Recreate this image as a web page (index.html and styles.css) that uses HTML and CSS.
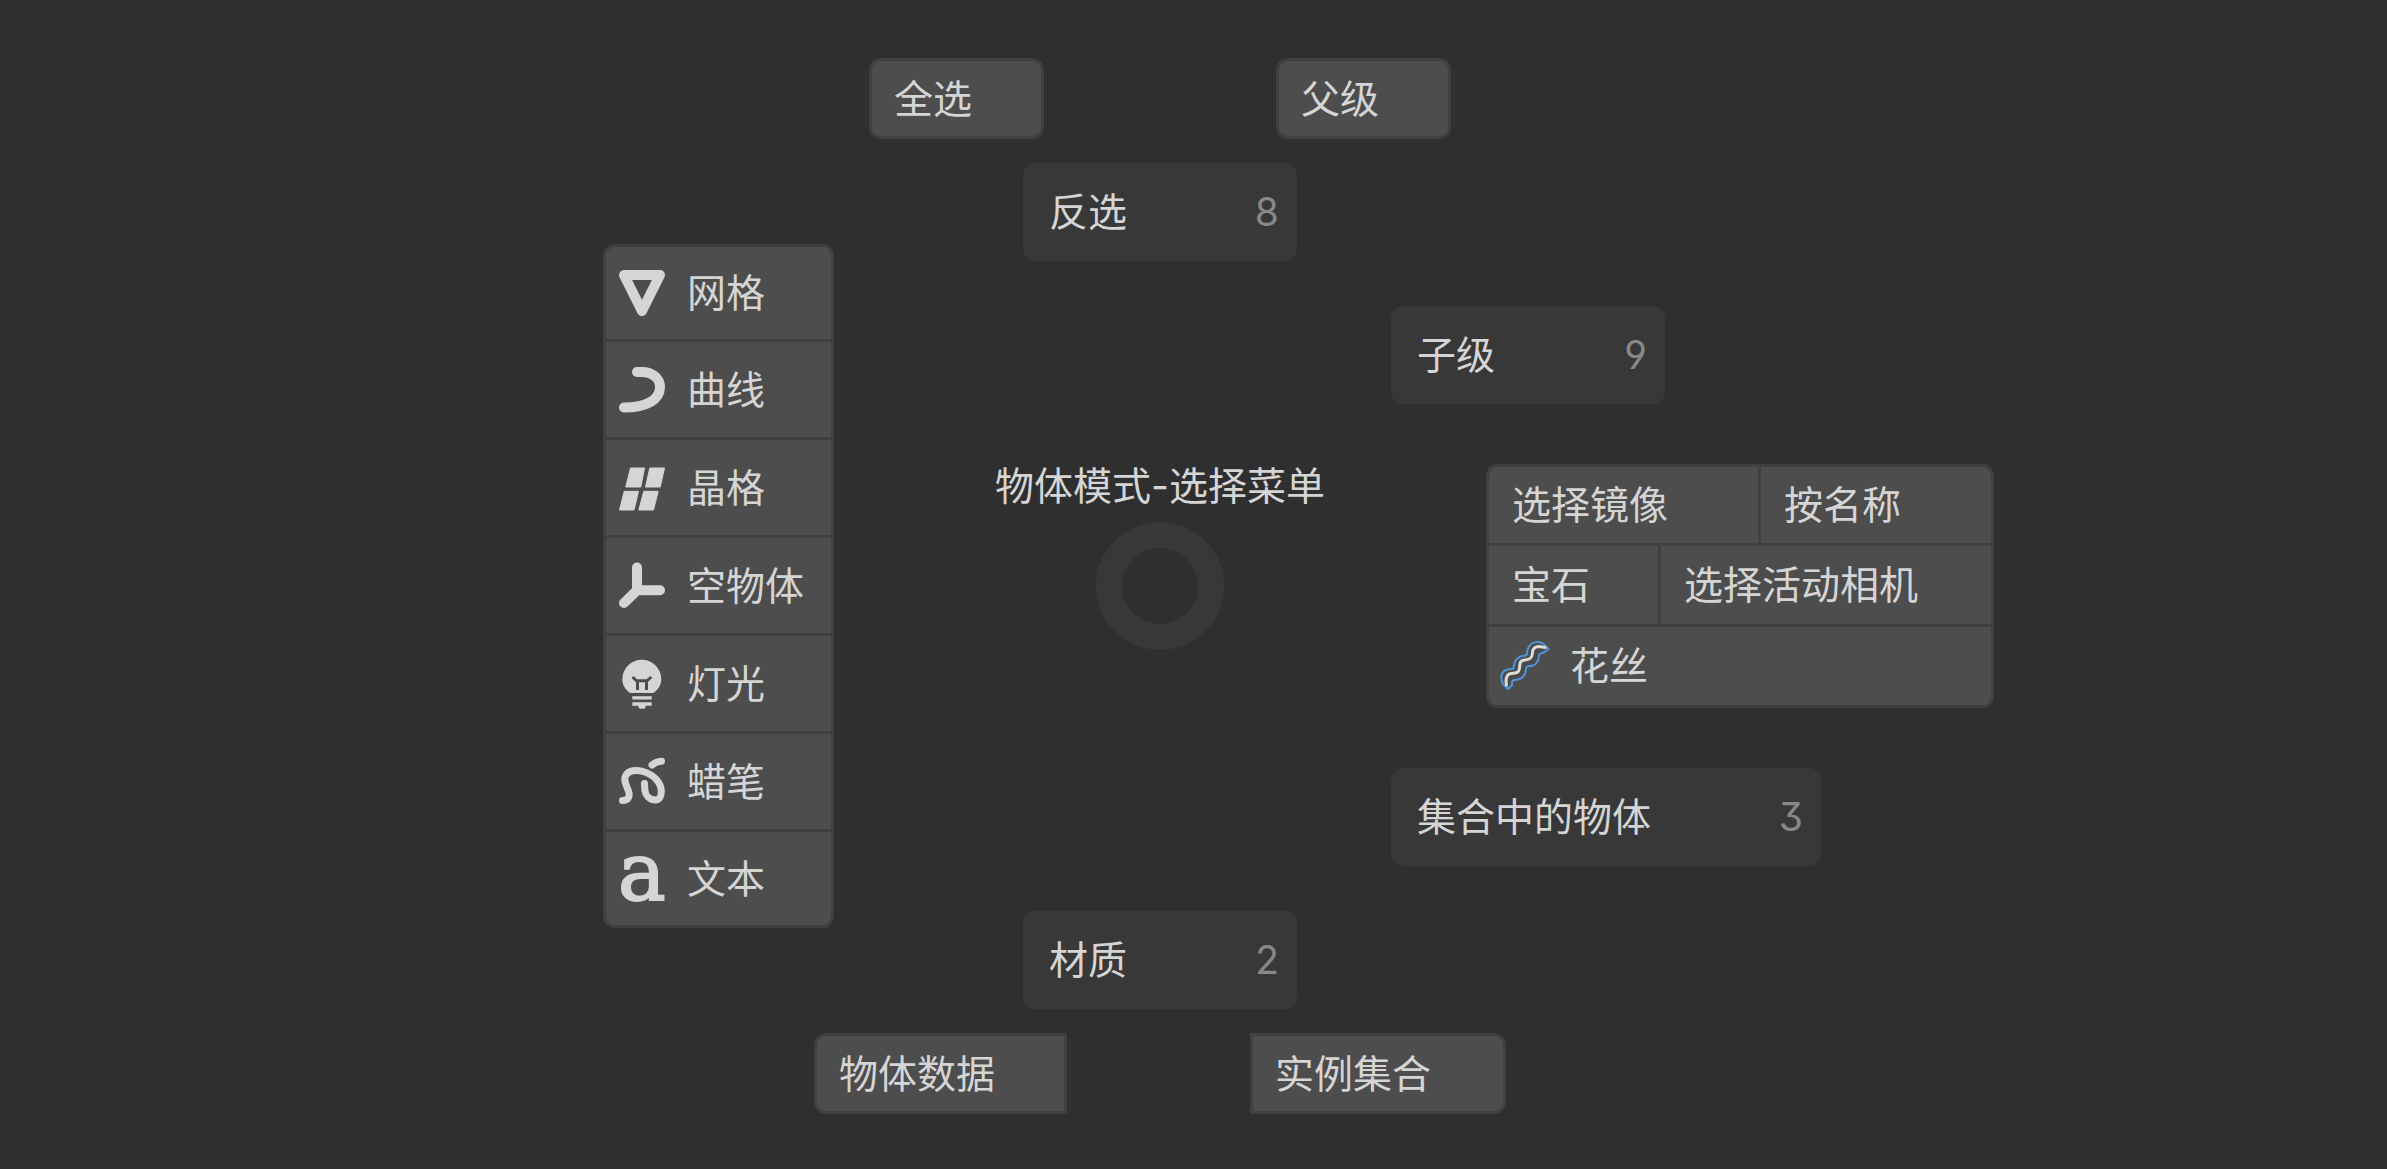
FILE: index.html
```html
<!DOCTYPE html>
<html lang="zh-CN">
<head>
<meta charset="utf-8">
<title>物体模式-选择菜单</title>
<link rel="stylesheet" href="styles.css">
</head>
<body>
<main class="pie">
  <div class="pair pair-top">
    <button class="button" type="button">全选</button>
    <button class="button" type="button">父级</button>
  </div>

  <div class="panel types">
    <button class="cell" type="button">
      <svg class="icon" viewBox="0 0 48 48" aria-hidden="true"><path class="line" d="M6 6H42L24 42Z"/></svg>
      网格
    </button>
    <button class="cell" type="button">
      <svg class="icon" viewBox="0 0 48 48" aria-hidden="true"><path class="line" d="M19 6H24C34 6 42 12 42 21C42 34 28 41.500 6 41.500"/></svg>
      曲线
    </button>
    <button class="cell" type="button">
      <svg class="icon" viewBox="0 0 48 48" aria-hidden="true"><path class="tile" d="M12.500 4H26.500L22.800 23H7.700ZM31.800 4H46.500L42.200 23H27.500ZM6.200 27.300H20.500L16 46H1.500ZM25.800 27.300H40.200L35.500 46H20.800Z"/></svg>
      晶格
    </button>
    <button class="cell" type="button">
      <svg class="icon" viewBox="0 0 48 48" aria-hidden="true"><path class="line" d="M19 5.500V28.300H42M19 28.300L6 41"/></svg>
      空物体
    </button>
    <button class="cell" type="button">
      <svg class="icon" viewBox="0 0 48 48" aria-hidden="true">
        <path class="fill" d="M12 33C7 29.500 4.300 24.500 4.300 19.300A19.500 19.500 0 0 1 43.300 19.300C43.300 24.500 40.500 29.500 35.500 33ZM14.300 36.200H33.700V39.500H14.300ZM14.300 42.200H33.700V45.700H27.500V47.500L26 48.800H22L20.500 47.500V45.700H14.300Z"/>
        <path class="filament" d="M14.500 17L18.500 20.800H29L33.300 17M19.500 20.800V30M28.500 20.800V30"/>
      </svg>
      灯光
    </button>
    <button class="cell" type="button">
      <svg class="icon" viewBox="0 0 48 48" aria-hidden="true"><path class="line thin" d="M4.500 42.500C10 42.500 12.500 39 10.500 33C8 27 5 21 8 17C11 12.500 18 11.500 25 13.500C36 16.500 43.300 25 43.300 33.500C43.300 39 41 42 37.500 42C31 42 27.500 37 26.800 32L26.500 25.500M34 7Q38 3.500 43.500 3.200"/></svg>
      蜡笔
    </button>
    <button class="cell" type="button">
      <svg class="icon" viewBox="0 0 48 48" aria-hidden="true"><text class="letter" x="0" y="45">a</text></svg>
      文本
    </button>
  </div>

  <div class="axis">
    <button class="submenu" type="button">反选<span class="key">8</span></button>
    <div class="hub">
      <h1 class="title">物体模式-选择菜单</h1>
      <div class="ring"></div>
    </div>
    <button class="submenu" type="button">材质<span class="key">2</span></button>
  </div>

  <div class="side">
    <button class="submenu" type="button">子级<span class="key">9</span></button>
    <div class="panel tools">
      <div class="row row-mirror">
        <button class="cell" type="button">选择镜像</button>
        <button class="cell" type="button">按名称</button>
      </div>
      <div class="row row-gem">
        <button class="cell" type="button">宝石</button>
        <button class="cell" type="button">选择活动相机</button>
      </div>
      <div class="row">
        <button class="cell" type="button">
          <svg class="icon" viewBox="0 0 48 48" aria-hidden="true">
            <path class="wire-edge" d="M7 47L2 42C-1 36 0 30 5 28C8 26.500 11 28 12.500 26.500C13 23 13 19 17 16C20 13 24 14.500 26 12.500C26 8 27 4 31 1.500C35 -1 41 -.5 44 3.500L47.500 7L43 10.500C40 11.500 38.500 11 38 13C38 19 35 24 28 24C25.500 24 25 25 25 28C24 34 20 38 13.500 38C11 38 11 40 11 43Z"/>
            <path class="wire" d="M5.500 43C4.500 38 5 32 10 31.500C15 31 18 31 18.500 26C19 20 19 18.500 24 18C30 17.500 31.500 15 31.500 10C32 6 35 4.500 38 4.500L44 5.500"/>
          </svg>
          花丝
        </button>
      </div>
    </div>
    <button class="submenu submenu-wide" type="button">集合中的物体<span class="key">3</span></button>
  </div>

  <div class="pair pair-bottom">
    <button class="button button-data" type="button">物体数据</button>
    <button class="button button-instance" type="button">实例集合</button>
  </div>
</main>
</body>
</html>
```
FILE: styles.css
```css
:root {
  --backdrop: #2f2f2f;
  --menu: #383838;
  --outline: #404040;
  --face: #4d4d4d;
  --ink: #d5d5d5;
  --muted: #888888;
}

* {
  box-sizing: border-box;
}

body {
  margin: 0;
  background: var(--backdrop);
  color: var(--ink);
  font: 400 39px/48px Inter, "Noto Sans CJK SC", sans-serif;
}

button {
  margin: 0;
  border: 0;
  color: inherit;
  font: inherit;
  text-align: left;
  white-space: nowrap;
  cursor: pointer;
}

/* Radial menu: the third track is centred on the ring */
.pie {
  display: grid;
  grid-template-columns: 201fr 326px 462px 603px 131fr;
  grid-template-rows: auto minmax(846px, auto) auto;
  row-gap: 24px;
  padding: 58px 0 55px;
}

.pair {
  grid-column: 3;
  display: flex;
  justify-content: center;
}

.pair-top {
  gap: 232px;
}

.pair-bottom {
  gap: 183px;
}

.button {
  flex: none;
  width: 175px;
  height: 81px;
  padding: 0 22px;
  border: 3px solid var(--outline);
  border-radius: 12px;
  background: var(--face);
}

.button-data {
  width: 253px;
  border-radius: 12px 0 0 12px;
}

.button-instance {
  width: 256px;
  border-radius: 0 12px 12px 0;
}

.panel {
  display: grid;
  gap: 3px;
  overflow: hidden;
  border: 3px solid var(--outline);
  border-radius: 12px;
  background: var(--outline);
}

.cell {
  display: flex;
  align-items: center;
  gap: 21px;
  padding: 0 23px;
  background: var(--face);
}

.cell:has(.icon) {
  padding-left: 12px;
}

.types {
  grid-column: 2;
  align-self: center;
  width: 231px;
  grid-template-rows: 92px repeat(5, 95px) 93px;
}

.axis {
  grid-column: 3;
  display: grid;
  grid-template-rows: auto 1fr auto;
  justify-items: center;
}

.hub {
  display: grid;
  grid-template-rows: 1fr auto 1fr;
  justify-items: center;
}

.title {
  align-self: end;
  margin: 0 0 12px;
  font: inherit;
  white-space: nowrap;
}

.ring {
  width: 128px;
  height: 128px;
  border: 26px solid var(--menu);
  border-radius: 50%;
}

.side {
  grid-column: 4;
  display: flex;
  flex-direction: column;
  align-items: flex-start;
  justify-content: center;
  gap: 60px;
}

.tools {
  align-self: flex-end;
  width: 508px;
  grid-template-rows: 76px 78px 78px;
}

.row {
  display: grid;
  gap: 3px;
}

.row-mirror {
  grid-template-columns: 269px 1fr;
}

.row-gem {
  grid-template-columns: 169px 1fr;
}

.submenu {
  display: flex;
  align-items: center;
  justify-content: space-between;
  width: 274px;
  height: 98px;
  padding: 0 18px 0 26px;
  border-radius: 12px;
  background: var(--menu);
}

.submenu-wide {
  width: 430px;
}

.key {
  color: var(--muted);
  font-feature-settings: "cv04", "cv09";
}

.icon {
  flex: none;
  width: 48px;
  height: 48px;
  overflow: visible;
}

.line {
  fill: none;
  stroke: var(--ink);
  stroke-width: 10;
  stroke-linecap: round;
  stroke-linejoin: round;
}

.thin {
  stroke-width: 7;
}

.tile {
  fill: var(--ink);
  stroke: var(--ink);
  stroke-width: 1;
  stroke-linejoin: round;
}

.fill {
  fill: var(--ink);
}

.filament {
  fill: none;
  stroke: var(--face);
  stroke-width: 3;
}

.letter {
  fill: var(--ink);
  stroke: var(--ink);
  stroke-width: 2;
  font: 80px "DejaVu Serif", serif;
}

.wire-edge {
  fill: #4a4a4a;
  stroke: #4f95dc;
  stroke-width: 2;
  stroke-linejoin: round;
}

.wire {
  fill: none;
  stroke: #dedad4;
  stroke-width: 3;
  stroke-linecap: round;
}
```
